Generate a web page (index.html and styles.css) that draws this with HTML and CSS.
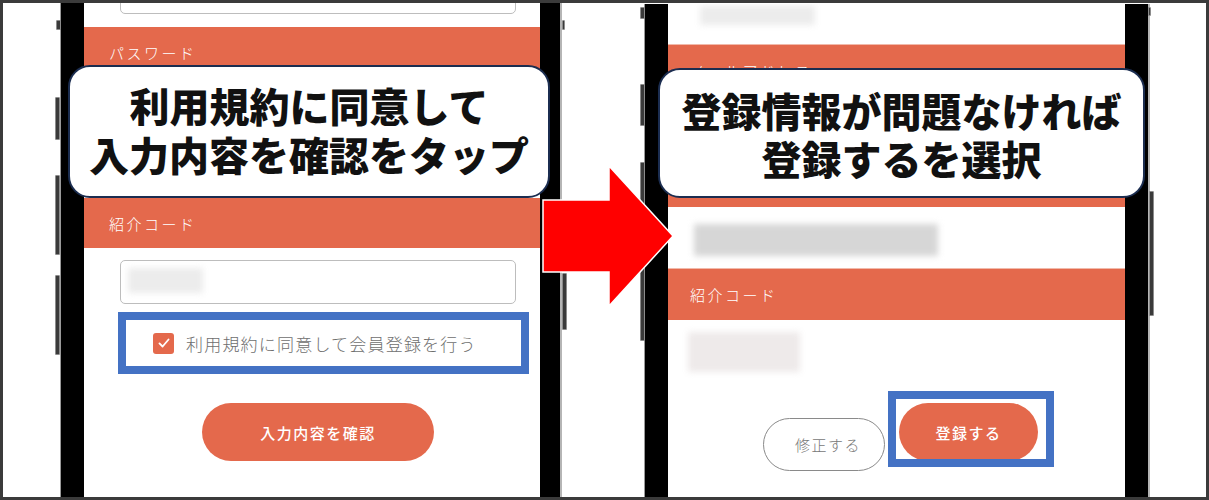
FILE: index.html
```html
<!DOCTYPE html>
<html lang="ja">
<head>
<meta charset="utf-8">
<title>登録手順</title>
<link rel="stylesheet" href="styles.css">
</head>
<body>
<div class="frame">
  <div class="phone phone-left">
    <span class="sbtn sbtn-l1"></span>
    <span class="sbtn sbtn-l2"></span>
    <span class="sbtn sbtn-l3"></span>
    <span class="sbtn sbtn-l4"></span>
    <span class="sbtn sbtn-r1"></span>
    <span class="sbtn sbtn-r2"></span>
    <div class="screen screen-left">
      <div class="field field-top"></div>
      <div class="band band-l band-first">パスワード</div>
      <div class="gap-l"></div>
      <div class="band band-l">紹介コード</div>
      <div class="field field-code"><span class="blur blur-code"></span></div>
      <div class="agree">
        <span class="check"><svg viewBox="0 0 20 20" width="14" height="14"><path d="M3.5 10.5 L8 15 L16.5 5" fill="none" stroke="#fff" stroke-width="2.6" stroke-linecap="round" stroke-linejoin="round"/></svg></span>
        <span class="agree-text">利用規約に同意して会員登録を行う</span>
      </div>
      <div class="btn btn-confirm">入力内容を確認</div>
    </div>
  </div>

  <div class="phone phone-right">
    <span class="sbtn sbtn-rl1"></span>
    <span class="sbtn sbtn-rl2"></span>
    <span class="sbtn sbtn-rl3"></span>
    <span class="sbtn sbtn-rl4"></span>
    <span class="sbtn sbtn-rr1"></span>
    <span class="sbtn sbtn-rr2"></span>
    <div class="screen screen-right">
      <span class="blur blur-top"></span>
      <div class="band band-r band-rfirst">メールアドレス</div>
      <div class="gap-r1"></div>
      <div class="band band-r"></div>
      <div class="gap-r2"><span class="blur blur-mid"></span></div>
      <div class="band band-r">紹介コード</div>
      <span class="blur blur-low"></span>
      <div class="btn-row">
        <div class="btn-outline">修正する</div>
        <div class="hl-box"><div class="btn btn-register">登録する</div></div>
      </div>
    </div>
  </div>

  <div class="callout callout-left">利用規約に同意して<br>入力内容を確認をタップ</div>
  <div class="callout callout-right">登録情報が問題なければ<br>登録するを選択</div>

  <svg class="arrow" width="136" height="146" viewBox="0 0 136 146">
    <polygon points="3,37 69,37 69,3 133,73 69,143 69,109 3,109" fill="#ff0000" stroke="#ffffff" stroke-width="1.5"/>
  </svg>
</div>
</body>
</html>
```

FILE: styles.css
```css
* { box-sizing: border-box; }
html, body { margin: 0; padding: 0; background: #ffffff; }
body { font-family: "Noto Sans CJK JP", "Noto Sans", sans-serif; }

.frame {
  position: relative;
  width: 1209px;
  height: 500px;
  border: 3px solid #3b3b3b;
  background: #ffffff;
  display: flex;
  align-items: stretch;
  overflow: hidden;
}

.phone {
  position: relative;
  background: #000;
  display: flex;
}
.phone-left {
  margin-left: 57px;
  padding: 0 20px 0 23px;
  border-left: 1px solid #9a9a9a;
  border-right: 2px solid #b5b5b5;
}
.phone-right {
  margin-left: 82px;
  margin-top: 1px;
  padding: 0 23px 0 23px;
  border-left: 1px solid #9a9a9a;
  border-right: 2px solid #b5b5b5;
}

.sbtn {
  position: absolute;
  width: 5px;
  background: #3a3a3a;
  border: 1px solid #8c8c8c;
  border-radius: 1px;
}
.sbtn-l1 { left: -5px; top: 17px; height: 10px; }
.sbtn-l2 { left: -6px; top: 94px; height: 43px; }
.sbtn-l3 { left: -6px; top: 172px; height: 80px; }
.sbtn-l4 { left: -6px; top: 272px; height: 80px; }
.sbtn-r1 { right: -5px; top: 17px; height: 10px; width: 3px; }
.sbtn-r2 { right: -7px; top: 270px; height: 57px; }
.sbtn-rl1 { left: -5px; top: 3px; height: 12px; }
.sbtn-rl2 { left: -5px; top: 80px; height: 42px; }
.sbtn-rl3 { left: -5px; top: 158px; height: 80px; }
.sbtn-rl4 { left: -5px; top: 257px; height: 80px; }
.sbtn-rr1 { right: -3px; top: 3px; height: 9px; width: 3px; }
.sbtn-rr2 { right: -6px; top: 187px; height: 125px; }

.screen {
  background: #ffffff;
  overflow: hidden;
}
.screen-left {
  width: 456px;
  padding: 0 24px 0 36px;
}
.screen-right {
  width: 457px;
}

.field {
  height: 44px;
  border: 1px solid #bdbdbd;
  border-radius: 5px;
  background: #fff;
}
.field-top { margin-top: -33px; }
.field-code {
  margin-top: 12px;
  padding: 7px 0 0 7px;
}

.band {
  background: #e4694c;
  color: #ffffff;
  font-weight: 300;
  display: flex;
  align-items: center;
}
.band-l {
  height: 50px;
  margin: 0 -24px 0 -36px;
  padding-left: 25px;
  font-size: 15px;
  letter-spacing: 2.5px;
}
.band-first { margin-top: 13px; }
.gap-l { height: 121px; }

.band-r {
  height: 52px;
  padding-left: 22px;
  font-size: 15px;
  letter-spacing: 2.5px;
  border-top: 1px solid #f1b9aa;
}

.blur {
  display: block;
  background: #e6e6e6;
  filter: blur(3px);
}
.blur-code { width: 75px; height: 25px; background: #ececec; }
.blur-top { width: 115px; height: 19px; margin: 2px 0 0 32px; background: #ececec; }
.blur-mid { width: 244px; height: 32px; margin-left: 26px; background: #d6d6d6; }
.blur-low { width: 112px; height: 40px; margin: 12px 0 0 20px; background: #eeeaea; }

.band-rfirst { margin-top: 19px; }
.gap-r1 { height: 59px; }
.gap-r2 { height: 61px; padding-top: 17px; }

.agree {
  margin: 8px 0 0 -2px;
  width: 411px;
  height: 62px;
  border: 8px solid #4472c4;
  display: flex;
  align-items: center;
  padding-left: 27px;
  gap: 12px;
}
.check {
  width: 21px;
  height: 21px;
  border-radius: 3px;
  background: #e4694c;
  display: flex;
  align-items: center;
  justify-content: center;
}
.agree-text {
  font-size: 17px;
  font-weight: 300;
  color: #6e6e6e;
  letter-spacing: 1.2px;
}

.btn {
  background: #e4694c;
  color: #ffffff;
  border-radius: 30px;
  display: flex;
  align-items: center;
  justify-content: center;
  font-size: 15px;
  font-weight: 500;
  letter-spacing: 1.5px;
}
.btn-confirm {
  margin: 29px auto 0;
  width: 232px;
  height: 58px;
}

.btn-row {
  display: flex;
  align-items: flex-start;
  margin-top: 19px;
}
.btn-outline {
  margin: 27px 0 0 95px;
  width: 122px;
  height: 53px;
  border: 1.5px solid #8a8a8a;
  border-radius: 27px;
  display: flex;
  align-items: center;
  justify-content: center;
  color: #777;
  font-size: 15px;
  font-weight: 300;
  letter-spacing: 1.5px;
  padding-left: 8px;
}
.hl-box {
  margin-left: 3px;
  width: 166px;
  height: 76px;
  border: 8px solid #4472c4;
  overflow: hidden;
  padding: 4px 0 0 3px;
}
.btn-register {
  width: 139px;
  height: 58px;
}

.callout {
  position: absolute;
  background: #ffffff;
  border: 2.5px solid #1b2d50;
  border-radius: 22px;
  font-size: 40px;
  font-weight: 900;
  color: #111;
  text-align: center;
  line-height: 49px;
  letter-spacing: 0;
}
.callout-left {
  left: 65px;
  top: 62px;
  width: 482px;
  height: 133px;
  padding-top: 14px;
}
.callout-right {
  left: 655px;
  top: 65px;
  width: 487px;
  height: 130px;
  padding-top: 16px;
  line-height: 48px;
}

.arrow {
  position: absolute;
  left: 537px;
  top: 160px;
}
```
